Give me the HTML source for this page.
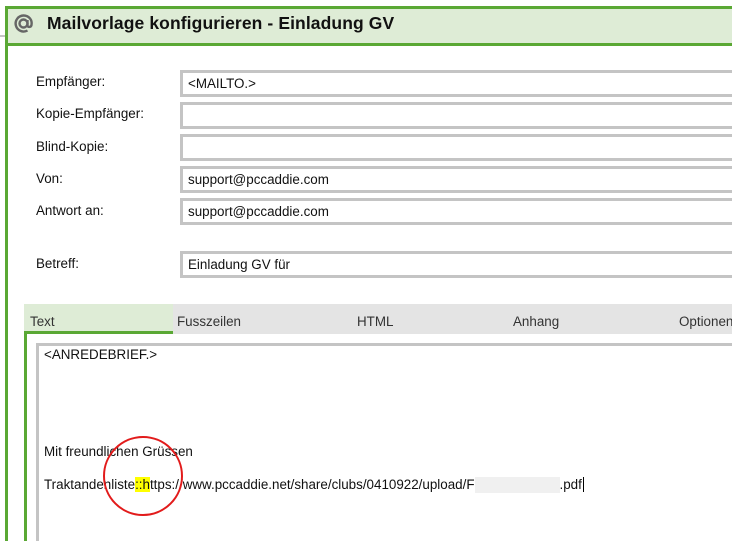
<!DOCTYPE html>
<html><head><meta charset="utf-8"><style>
*{margin:0;padding:0;box-sizing:border-box}
html,body{width:732px;height:541px;overflow:hidden}
body{background:#fff;font-family:"Liberation Sans",sans-serif;position:relative;color:#111}
.abs{position:absolute}
.lbl{position:absolute;left:36px;font-size:13.4px}
.inp{position:absolute;left:180px;width:600px;height:27px;border:3px solid #c4c4c4;border-right:none;font-size:13.4px;padding:3px 0 0 5px}
.tab{position:absolute;top:314px;font-size:13.4px;color:#333}
</style></head><body>
<div class="abs" style="left:0;top:35px;width:6px;height:2px;background:#c4c4c4"></div>
<div class="abs" style="left:5px;top:6px;width:740px;height:540px;border:3px solid #5aa834;border-right:none;border-bottom:none"></div>
<div class="abs" style="left:8px;top:9px;width:730px;height:37px;background:#deecd6;border-bottom:3px solid #5aa834"></div>
<svg class="abs" style="left:13px;top:13px" width="21" height="21" viewBox="0 0 21 21"><circle cx="10.5" cy="10.5" r="4" fill="none" stroke="#666" stroke-width="2.4"/><path d="M14.5 7v5.5c0 2 3.5 2 4-0.5 1-5-2.5-9.5-8-9.5a8 8 0 1 0 4 15" fill="none" stroke="#666" stroke-width="2.4"/></svg>
<div class="abs" style="left:47px;top:13px;font-size:17.5px;font-weight:bold;color:#111;letter-spacing:0.1px">Mailvorlage konfigurieren - Einladung GV</div>

<div class="lbl" style="top:74px">Empfänger:</div><div class="inp" style="top:70px">&lt;MAILTO.&gt;</div>
<div class="lbl" style="top:106px">Kopie-Empfänger:</div><div class="inp" style="top:102px"></div>
<div class="lbl" style="top:139px">Blind-Kopie:</div><div class="inp" style="top:134px"></div>
<div class="lbl" style="top:171px">Von:</div><div class="inp" style="top:166px">support@pccaddie.com</div>
<div class="lbl" style="top:203px">Antwort an:</div><div class="inp" style="top:198px">support@pccaddie.com</div>
<div class="lbl" style="top:256px">Betreff:</div><div class="inp" style="top:251px">Einladung GV für</div>

<div class="abs" style="left:24px;top:304px;width:720px;height:30px;background:#e4e4e4"></div>
<div class="abs" style="left:24px;top:304px;width:149px;height:30px;background:#deecd6;border-bottom:3px solid #5aa834"></div>
<div class="tab" style="left:30px">Text</div>
<div class="tab" style="left:177px">Fusszeilen</div>
<div class="tab" style="left:357px">HTML</div>
<div class="tab" style="left:513px">Anhang</div>
<div class="tab" style="left:679px">Optionen</div>
<div class="abs" style="left:24px;top:334px;width:3px;height:210px;background:#5aa834"></div>
<div class="abs" style="left:36px;top:343px;width:720px;height:210px;border:3px solid #c4c4c4;border-right:none;border-bottom:none"></div>
<div class="abs" style="left:44px;top:347px;font-size:13.4px">&lt;ANREDEBRIEF.&gt;</div>
<div class="abs" style="left:44px;top:444px;font-size:13.4px">Mit freundlichen Grüssen</div>
<div class="abs" style="left:44px;top:477px;font-size:13.4px;white-space:nowrap">Traktandenliste<span style="background:#ffff00">::h</span>ttps://www.pccaddie.net/share/clubs/0410922/upload/F<span style="display:inline-block;width:85px;height:16px;background:#f0f0f0;vertical-align:middle"></span>.pdf<span style="border-left:1px solid #000;margin-left:1px"></span></div>
<svg class="abs" style="left:0;top:0" width="732" height="541"><circle cx="143" cy="476" r="39" fill="none" stroke="#e21b1b" stroke-width="2"/></svg>
</body></html>
